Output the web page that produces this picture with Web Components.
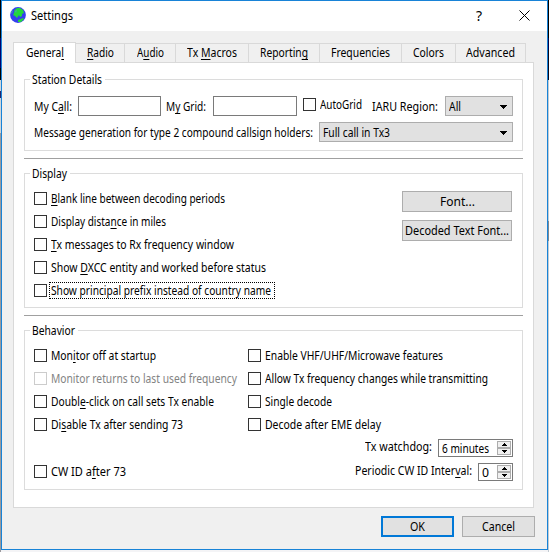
<!DOCTYPE html>
<html lang="en">
<head>
<meta charset="utf-8">
<title>Settings</title>
<style>
html,body{margin:0;width:549px;height:552px;overflow:hidden}
body{font:12px/16px "Noto Sans","DejaVu Sans",sans-serif;color:#000}
</style>
</head>
<body>
<settings-window></settings-window>
<script>
// Label with an optional mnemonic (the character after "&"), condensed to a fixed width.
class UiText extends HTMLElement{
  connectedCallback(){
    const root=this.attachShadow({mode:'open'});
    const t=this.getAttribute('t'),i=t.indexOf('&');
    root.innerHTML='<style>:host{display:block;white-space:pre;flex:none;line-height:16px;height:16px}span{display:inline-block;transform-origin:0 50%}u{text-decoration-thickness:1px;text-underline-offset:1.5px;text-decoration-skip-ink:none}</style><span></span>';
    const s=root.querySelector('span');
    if(i<0)s.textContent=t;
    else{const u=document.createElement('u');u.textContent=t[i+1];s.append(t.slice(0,i),u,t.slice(i+2));}
    const w=+this.getAttribute('w');
    if(w){
      this.style.width=w+'px';
      s.style.transform=`scaleX(${w/s.getBoundingClientRect().width})`;
    }
  }
}
customElements.define('ui-text',UiText);

const define=(name,html)=>customElements.define(name,class extends HTMLElement{
  connectedCallback(){
    if(this.shadowRoot)return;
    const tpl=document.createElement('template');tpl.innerHTML=html;
    this.attachShadow({mode:'open'}).append(tpl.content.cloneNode(true));
  }
});

define('ui-check',`<style>
:host{display:flex;height:13px;align-items:center;gap:4px;--c:#333}
:host([disabled]){--c:#ccc;color:#838383}
i{box-sizing:border-box;width:13px;height:13px;flex:none;border:1px solid var(--c);background:#fff}
div{margin-top:1px}
:host([focused]) div{outline:1px dotted #000;outline-offset:0;padding:0 3px 0 1px;height:15px;margin-left:-1px;margin-top:-1px;line-height:15px}
</style><i></i><div><slot></slot></div>`);

define('ui-button',`<style>
:host{box-sizing:border-box;display:flex;justify-content:center;align-items:center;height:21px;background:#e1e1e1;border:1px solid #adadad;padding-top:1px}
:host([primary]){border:2px solid #0078d7}
</style><slot></slot>`);

define('ui-combo',`<style>
:host{box-sizing:border-box;display:flex;justify-content:space-between;align-items:center;height:20px;background:#e1e1e1;border:1px solid #adadad;padding:1px 5px 0 3px}
svg{display:block}
</style><slot></slot><svg width="8" height="4" viewBox="0 0 8 4" shape-rendering="crispEdges"><path d="M0 0H8L4 4Z"/></svg>`);

define('ui-input',`<style>:host{box-sizing:border-box;display:block;height:20px;border:1px solid #7a7a7a;background:#fff}</style>`);

define('ui-spin',`<style>
:host{box-sizing:border-box;display:flex;justify-content:space-between;height:18px;border:1px solid #7a7a7a;background:#fff;padding:1px 1px 1px 3px}
slot{display:block}
.s{display:grid;grid-template-rows:7px 7px;width:14px}
b{box-sizing:border-box;display:grid;place-items:center;background:#f0f0f0;border:1px solid #adadad}
svg{display:block}
</style><slot></slot><div class="s"><b><svg width="5" height="3" shape-rendering="crispEdges"><path d="M0 3L2.5 0L5 3Z"/></svg></b><b><svg width="5" height="3" shape-rendering="crispEdges"><path d="M0 0L2.5 3L5 0Z"/></svg></b></div>`);

define('ui-group',`<style>
:host{box-sizing:border-box;display:block;border:1px solid #dcdcdc;width:499px;height:var(--h)}
header{width:fit-content;height:16px;margin:-8px 0 -1px 5px;padding:0 3px 0 2px;background:#fff}
</style><header><slot name="title"></slot></header><slot></slot>`);

define('ui-tab',`<style>
:host{box-sizing:border-box;display:flex;justify-content:center;height:19px;border:1px solid #d9d9d9;border-left:0;border-bottom:0;background:#f0f0f0;padding-top:1px}
:host([active]){height:21px;background:#fff;border-left:1px solid #d9d9d9;margin-bottom:-1px;padding-top:2px}
</style><slot></slot>`);

define('ui-titlebar',`<style>
:host{display:flex;align-items:center;height:30px;background:#fff;padding:0 17px 0 8px}
.t{margin-left:5px;flex:1}.q{font-size:14px;margin-right:37px}
svg{display:block}.g{margin-top:-2px}
</style>
<svg class="g" width="16" height="16" viewBox="0 0 16 16"><circle cx="8" cy="8" r="7.9" fill="#343fee"/><path d="M4.500 3L6 2L7 1L10 1L13 3L14 6L12 7L12 9L10 10L9 8L7 11L5 9L3 8L4 6Z" fill="#22d83c"/><path d="M8 13L13 11L14 12L11 15L8 15Z" fill="#22d83c"/><path d="M1 5L3 3L2 7ZM5 4L7 3L6 6Z" fill="#4aa0b0"/></svg>
<ui-text class="t" t="Settings" w="42"></ui-text><span class="q">?</span>
<svg width="11" height="11" viewBox="0 0 11 11" style="margin-top:-1px"><path d="M.5 .5L10.5 10.5M10.5 .5L.5 10.5" stroke="#000" fill="none"/></svg>`);

const chk=(t,w,a='')=>`<ui-check ${a}><ui-text t="${t}" w="${w}"></ui-text></ui-check>`;
define('settings-window',`<style>
:host{box-sizing:border-box;display:block;width:549px;height:552px;padding:0 1px 2px;background:
linear-gradient(#000 0 38px,#00006a 38px 68px,#000 68px 80px,#d0d5da 80px 91px,#23236a 91px 98px,#d0d5da 98px 133px,#9a9a9e 133px) 0 0/1px 100% no-repeat,
linear-gradient(#000 0 38px,#000048 38px 50px,#05051c 50px 80px,#c3cbd2 80px 221px,#808890 221px 241px,#c3cbd2 241px) 548px 0/1px 100% no-repeat,#f4f4f6}
.win{box-sizing:border-box;width:547px;height:550px;border:1px solid #1883d7;background:#f0f0f0}
.tabs{display:grid;grid-template-columns:63px 49px 51px 73px 71px 82px 54px 70px;align-items:end;margin:11px 0 0 11px;height:20px}
.page{box-sizing:border-box;width:521px;height:446px;margin-left:11px;border:1px solid #d9d9d9;background:#fff;padding:16px 10px}
ui-tab[active]{position:relative}
hr{border:0;height:1px;background:#a0a0a0;margin:7px 0 14px}
.row{display:flex}
.st{padding:9px 9px 0 9px}
.r1{align-items:flex-start}.r1 ui-text{margin-top:3px}
.r2{justify-content:space-between;margin-top:6px}.r2>ui-text{margin-top:3px}
.disp{display:flex;justify-content:space-between;padding:10px 10px 0 9px}
.list{display:grid;grid-auto-rows:13px;row-gap:10px;margin-top:1px}
.btns{display:grid;gap:8px;width:110px;align-content:start}
.beh{display:grid;grid-template-columns:214px auto;padding:11px 0 0 9px}
.beh .list{margin:0}
.sp{display:flex;justify-content:flex-end;margin-right:9px}
.foot{display:flex;justify-content:flex-end;gap:8px;padding:8px 12px 0 0}
</style>
<div class="win">
<ui-titlebar></ui-titlebar>
<nav class="tabs">
<ui-tab active><ui-text t="Genera&l" w="38"></ui-text></ui-tab><ui-tab><ui-text t="&Radio" w="27"></ui-text></ui-tab><ui-tab><ui-text t="A&udio" w="27"></ui-text></ui-tab><ui-tab><ui-text t="Tx &Macros" w="50"></ui-text></ui-tab><ui-tab><ui-text t="Reportin&g" w="48"></ui-text></ui-tab><ui-tab><ui-text t="Frequencies" w="59"></ui-text></ui-tab><ui-tab><ui-text t="Colors" w="31"></ui-text></ui-tab><ui-tab><ui-text t="Advanced" w="49"></ui-text></ui-tab>
</nav>
<main class="page">
<ui-group style="--h:72px"><ui-text slot="title" t="Station Details" w="70"></ui-text>
<div class="st"><div class="row r1"><ui-text t="My C&all:" w="38"></ui-text><ui-input style="width:83px;margin-left:6px"></ui-input><ui-text t="M&y Grid:" w="40" style="margin-left:5px"></ui-text><ui-input style="width:84px;margin-left:7px"></ui-input><ui-check style="margin:2px 0 0 6px"><ui-text t="AutoGrid" w="42" style="margin:0"></ui-text></ui-check><ui-text t="IARU Region:" w="66" style="margin-left:10px"></ui-text><ui-combo style="width:68px;margin-left:auto"><ui-text t="All" w="12" style="margin:0"></ui-text></ui-combo></div>
<div class="row r2"><ui-text t="Message generation for type 2 compound callsign holders:" w="279"></ui-text><ui-combo style="width:194px"><ui-text t="Full call in Tx3" w="67"></ui-text></ui-combo></div></div>
</ui-group>
<hr>
<ui-group style="--h:135px"><ui-text slot="title" t="Display" w="35"></ui-text>
<div class="disp"><div class="list">${chk('&Blank line between decoding periods',174)+chk('Display dista&nce in miles',115)+chk('&Tx messages to Rx frequency window',183)+chk('Show &DXCC entity and worked before status',215)+chk('Show principal prefix instead of country name',220,'focused')}</div>
<div class="btns"><ui-button><ui-text t="Font..." w="35"></ui-text></ui-button><ui-button><ui-text t="Decoded Text Font..." w="104"></ui-text></ui-button></div></div>
</ui-group>
<hr>
<ui-group style="--h:160px"><ui-text slot="title" t="Behavior" w="43"></ui-text>
<div class="beh"><div class="list">${chk('Mon&itor off at startup',105)+chk('Monitor returns to last used frequency',186,'disabled')+chk('Doubl&e-click on call sets Tx enable',163)+chk('Di&sable Tx after sending 73',132)}</div>
<div class="list">${chk('Enable VHF/UHF/Microwave features',178)+chk('Allow Tx frequency changes while transmitting',223)+chk('Single decode',67)+chk('Decode after EME delay',116)}</div></div>
<div class="sp" style="margin-top:8px"><ui-text t="Tx watchdog:" w="67"></ui-text><ui-spin style="width:75px;margin-left:6px"><ui-text t="6 minutes" w="47"></ui-text></ui-spin></div>
<div class="sp" style="justify-content:space-between;margin-left:9px;margin-top:6px"><div style="padding-top:2px">${chk('CW ID a&fter 73',75)}</div><div class="row"><ui-text t="Periodic CW ID Inter&val:" w="117"></ui-text><ui-spin style="width:35px;margin-left:6px"><ui-text t="0" w="7"></ui-text></ui-spin></div></div>
</ui-group>
</main>
<footer class="foot"><ui-button primary style="width:73px"><ui-text t="OK" w="15"></ui-text></ui-button><ui-button style="width:73px"><ui-text t="Cancel" w="33"></ui-text></ui-button></footer>
</div>`);
</script>
</body>
</html>
